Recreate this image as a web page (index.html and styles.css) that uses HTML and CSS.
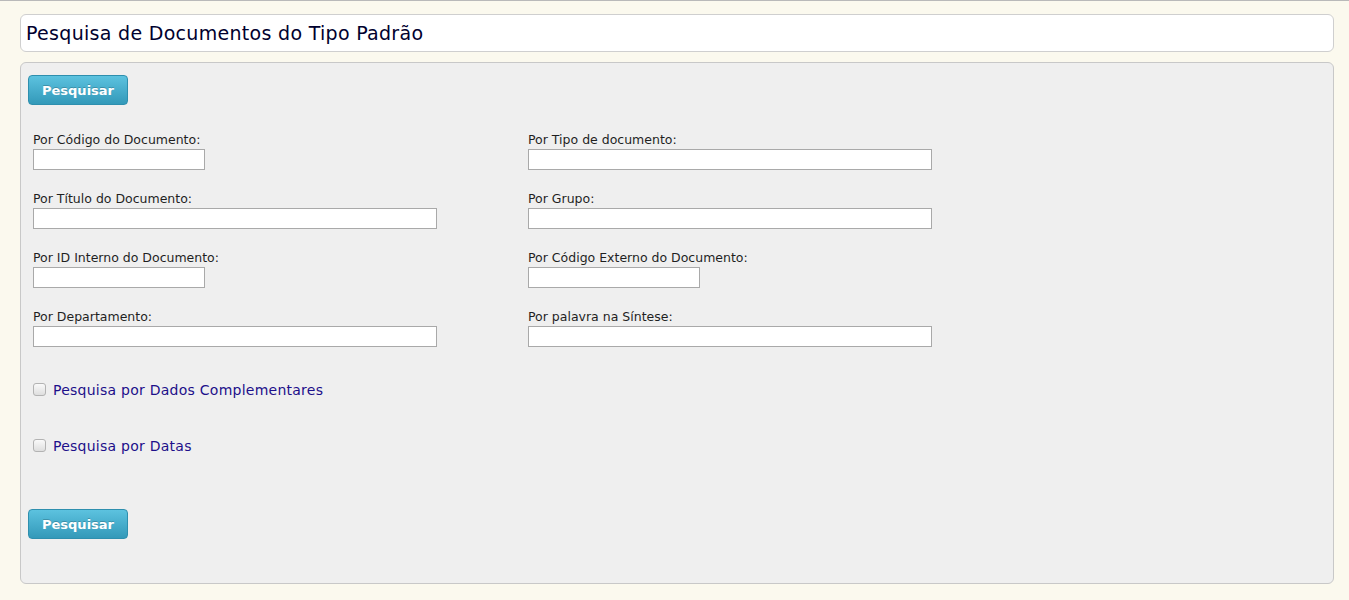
FILE: index.html
```html
<!DOCTYPE html>
<html lang="pt">
<head>
<meta charset="utf-8">
<title>Pesquisa de Documentos do Tipo Padrão</title>
<link rel="stylesheet" href="styles.css">
</head>
<body>
<div class="page">
  <div class="title-box">Pesquisa de Documentos do Tipo Padrão</div>
  <div class="panel">
    <button class="btn" type="button">Pesquisar</button>
    <div class="form">
      <div class="grid">
        <div class="field"><label>Por Código do Documento:</label><input class="in short" type="text"></div>
        <div class="field"><label>Por Tipo de documento:</label><input class="in wide" type="text"></div>
        <div class="field"><label>Por Título do Documento:</label><input class="in wide" type="text"></div>
        <div class="field"><label>Por Grupo:</label><input class="in wide" type="text"></div>
        <div class="field"><label>Por ID Interno do Documento:</label><input class="in short" type="text"></div>
        <div class="field"><label>Por Código Externo do Documento:</label><input class="in short" type="text"></div>
        <div class="field"><label>Por Departamento:</label><input class="in wide" type="text"></div>
        <div class="field"><label>Por palavra na Síntese:</label><input class="in wide" type="text"></div>
      </div>
      <label class="check"><input type="checkbox" class="cb"><span>Pesquisa por Dados Complementares</span></label>
      <label class="check"><input type="checkbox" class="cb"><span>Pesquisa por Datas</span></label>
    </div>
    <button class="btn" type="button">Pesquisar</button>
  </div>
</div>
</body>
</html>
```

FILE: styles.css
```css
html, body {
  margin: 0;
  padding: 0;
}
body {
  background: #fbf9ee;
  border-top: 1px solid #b9b9b9;
  font-family: "DejaVu Sans", Verdana, sans-serif;
  height: 599px;
  overflow: hidden;
}
.page {
  padding: 13px 15px 0 20px;
}
.title-box {
  box-sizing: border-box;
  height: 38px;
  background: #fff;
  border: 1px solid #cfcfcf;
  border-radius: 6px;
  padding: 0 0 0 5px;
  font-size: 19px;
  letter-spacing: 0.3px;
  line-height: 36px;
  color: #00002e;
}
.panel {
  box-sizing: border-box;
  margin-top: 10px;
  height: 522px;
  background: #efefef;
  border: 1px solid #c8c8c8;
  border-radius: 6px;
  padding: 12px 7px 0 7px;
}
.btn {
  display: block;
  box-sizing: border-box;
  width: 100px;
  height: 30px;
  padding: 0;
  border: 1px solid #2e8fae;
  border-radius: 4px;
  background: linear-gradient(#5cc2df, #3399b9);
  color: #fff;
  font-family: "DejaVu Sans", Verdana, sans-serif;
  font-weight: bold;
  font-size: 13px;
  text-shadow: 0 -1px 0 rgba(0,0,0,0.2);
}
.form {
  padding: 27px 0 0 5px;
}
.grid {
  display: grid;
  grid-template-columns: 495px 500px;
  row-gap: 21px;
}
.field label {
  display: block;
  font-family: "DejaVu Sans", Tahoma, sans-serif;
  font-size: 12.5px;
  line-height: 16px;
  height: 17px;
  color: #1f1f1f;
}
.in {
  display: block;
  box-sizing: border-box;
  height: 21px;
  margin: 0;
  border: 1px solid #a9a9a9;
  background: #fff;
  padding: 0 2px;
}
.in.short { width: 172px; }
.in.wide { width: 404px; }
.check {
  display: flex;
  align-items: center;
  height: 20px;
  margin-top: 33px;
  color: #1d108a;
  font-size: 14px;
  letter-spacing: 0.25px;
}
.check + .check {
  margin-top: 36px;
}
.cb {
  appearance: none;
  -webkit-appearance: none;
  box-sizing: border-box;
  width: 13px;
  height: 13px;
  margin: 0 7px 1px 0;
  border: 1px solid #b3b3b3;
  border-radius: 3px;
  background: linear-gradient(#fafafa, #dedede);
}
.panel > .btn:last-child {
  margin-top: 53px;
}
```
